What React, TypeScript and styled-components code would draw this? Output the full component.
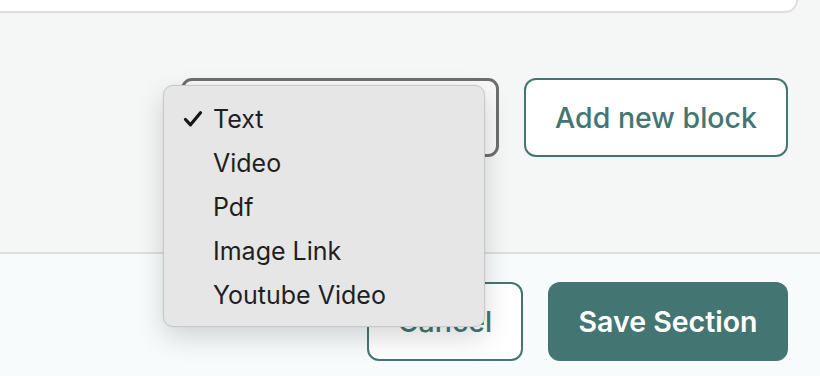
import React, { useState } from 'react'
import styled, { createGlobalStyle } from 'styled-components'

const GlobalStyle = createGlobalStyle`
  html, body {
    margin: 0;
    padding: 0;
    background: #f5f7f7;
    font-family: Inter, 'Open Sans', sans-serif;
  }
`

const Page = styled.div`
  display: flex;
  flex-direction: column;
  width: 820px;
  height: 376px;
  overflow: hidden;
`

const TopCard = styled.div`
  height: 11px;
  margin-right: 22px;
  background: #ffffff;
  border-bottom: 2px solid #dedede;
  border-right: 2px solid #dedede;
  border-bottom-right-radius: 20px;
`

const Editor = styled.div`
  flex: 0 0 auto;
  height: 239px;
  display: flex;
  justify-content: flex-end;
  align-items: flex-start;
  gap: 25px;
  padding: 65px 32px 0 0;
  box-sizing: border-box;
`

const Footer = styled.div`
  flex: 1;
  border-top: 2px solid #dedede;
  background: #f7fbfb;
  display: flex;
  justify-content: flex-end;
  align-items: flex-start;
  gap: 25px;
  padding: 28px 32px 0 0;
`

const SelectBox = styled.div`
  position: relative;
  width: 318px;
  height: 79px;
  box-sizing: border-box;
  border: 3px solid #6e6e6e;
  border-radius: 11px;
  background: #f9f9f9;
`

const Menu = styled.ul`
  position: absolute;
  left: -21px;
  top: 4px;
  width: 322px;
  margin: 0;
  padding: 11px 0 9px;
  list-style: none;
  box-sizing: border-box;
  background: #e6e6e6;
  border: 1px solid #c9c9c9;
  border-radius: 10px;
  box-shadow: 0 10px 28px rgba(0, 0, 0, 0.16), 0 0 2px rgba(0, 0, 0, 0.08);
  z-index: 2;
`

const MenuItem = styled.li`
  display: flex;
  align-items: center;
  height: 44px;
  padding-left: 49px;
  position: relative;
  font-family: Inter, 'Noto Sans', sans-serif;
  font-size: 25px;
  color: #1f1f1f;
`

const Check = styled.svg`
  position: absolute;
  left: 19px;
  top: 13px;
`

const Button = styled.button<{ $solid?: boolean; $w: number }>`
  width: ${p => p.$w}px;
  height: 79px;
  box-sizing: border-box;
  border-radius: 12px;
  border: 2px solid #437672;
  background: ${p => (p.$solid ? '#437672' : '#ffffff')};
  color: ${p => (p.$solid ? '#ffffff' : '#437672')};
  font-family: Inter, 'Open Sans', sans-serif;
  font-size: 28.5px;
  font-weight: ${p => (p.$solid ? 600 : 500)};
  cursor: pointer;
`

const options = ['Text', 'Video', 'Pdf', 'Image Link', 'Youtube Video']

export default function App() {
  const [selected] = useState('Text')
  return (
    <Page>
      <GlobalStyle />
      <TopCard />
      <Editor>
        <SelectBox>
          <Menu>
            {options.map(o => (
              <MenuItem key={o}>
                {o === selected && (
                  <Check width="20" height="18" viewBox="0 0 20 18">
                    <path d="M2.5 9.5 L7.5 14.8 L17.5 2.8" fill="none" stroke="#161616" strokeWidth="3.2" strokeLinecap="round" strokeLinejoin="round" />
                  </Check>
                )}
                {o}
              </MenuItem>
            ))}
          </Menu>
        </SelectBox>
        <Button $w={264}>Add new block</Button>
      </Editor>
      <Footer>
        <Button $w={156}>Cancel</Button>
        <Button $solid $w={240}>Save Section</Button>
      </Footer>
    </Page>
  )
}
